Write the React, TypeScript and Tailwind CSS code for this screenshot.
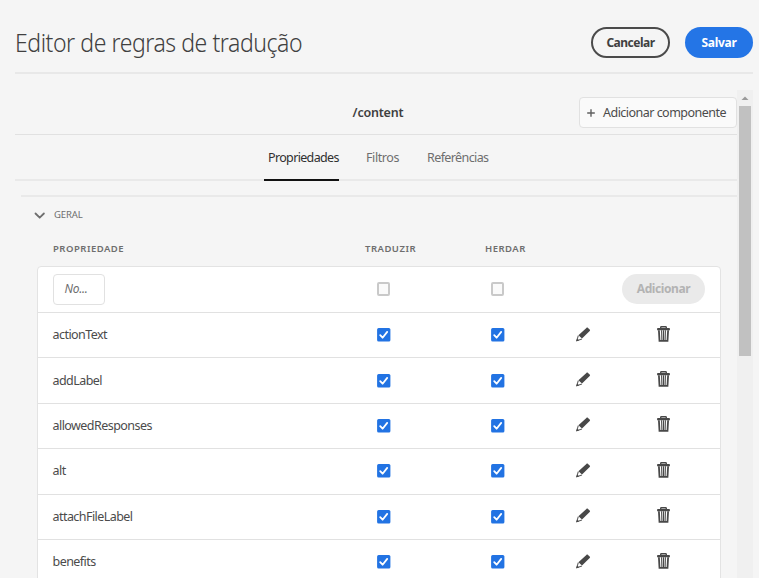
const rows = ['actionText', 'addLabel', 'allowedResponses', 'alt', 'attachFileLabel', 'benefits'];

function Checked() {
  return (
    <svg width="14" height="14" viewBox="0 0 14 14" className="block">
      <rect x="0.1" width="13.3" height="13.4" y="0.1" rx="1.5" fill="#2273e3" />
      <path d="M3.2 7.2 5.6 9.7 10.2 3.9" fill="none" stroke="#fff" strokeWidth="1.8" strokeLinecap="round" strokeLinejoin="round" />
    </svg>
  );
}

function Unchecked() {
  return <div className="mr-px h-[14px] w-[13px] rounded-[2px] border-2 border-[#c9c9c9] bg-[#fafafa]" />;
}

function Pencil() {
  return (
    <svg width="15" height="15" viewBox="0 0 15 15" className="block">
      <path d="M10.4.9c.5-.5 1.1-.5 1.6 0l1.7 1.6c.5.5.5 1.1 0 1.6L6 11.6 2.4 8.2z" fill="#484848" />
      <path d="M2.3 8.7.7 13.8l5.2-1.7" fill="none" stroke="#5c5c5c" strokeWidth="1.1" strokeLinejoin="round" />
      <path d="m.2 14.3.9-2.8 2 1.9z" fill="#484848" />
    </svg>
  );
}

function Trash() {
  return (
    <svg width="13" height="16" viewBox="0 0 13 16" className="block">
      <path d="M3.7 2.6V1.5Q3.7.8 4.4.8h4.2q.7 0 .7.7v1.1" fill="none" stroke="#484848" strokeWidth="1.4" />
      <path d="M.7 2.1h11.6q.6 0 .6.6v1.6H.1V2.7q0-.6.6-.6z" fill="#484848" />
      <path d="M1.9 4.3 2.5 14.8h8l.6-10.5" fill="none" stroke="#484848" strokeWidth="1.8" />
      <path d="m4.6 4.3.3 9.8M6.5 4.3v9.8M8.4 4.3l-.3 9.8" fill="none" stroke="#484848" strokeWidth="1.1" />
    </svg>
  );
}

export default function App() {
  return (
    <div className="flex h-[578px] w-[759px] flex-col overflow-hidden bg-[#f5f5f5] pl-[15px] font-['Noto_Sans',sans-serif] text-[#4b4b4b]">
      <header className="flex h-[74px] w-[738px] shrink-0 items-start border-b-2 border-[#e8e8e8]">
        <h1 className="mt-[24px] w-[300px] origin-left scale-x-[0.886] whitespace-nowrap text-[26px] leading-[36px] font-light tracking-[-0.5px] text-[#404040]">Editor de regras de tradução</h1>
        <div className="mt-[27px] ml-auto flex gap-[15px]">
          <button className="h-[31px] w-[79px] rounded-full border-2 border-[#4b4b4b] text-[12px] leading-[26px] font-bold tracking-[-0.5px] text-[#404040]">Cancelar</button>
          <button className="h-[31px] w-[68px] rounded-full bg-[#2475e6] text-[12px] leading-[30px] font-bold tracking-[-0.3px] text-white">Salvar</button>
        </div>
      </header>

      <div className="mt-4 flex min-h-0 flex-1">
        <main className="flex w-[722px] flex-col">
          <div className="flex h-[45px] shrink-0 border-b border-[#e1e1e1]">
            <div className="w-[159px]" />
            <div className="flex-1 pt-[13px] pl-[3px] text-center text-[12.5px] leading-5 font-semibold tracking-[-0.2px] text-[#3f3f3f]">/content</div>
            <button className="mt-[7px] flex h-[31px] w-[158px] items-center rounded-[4px] border border-[#e1e1e1] bg-[#fafafa] pl-[7px]">
              <svg width="8" height="8" viewBox="0 0 8 8"><path d="M4 .2v7.6M.2 4h7.6" stroke="#606060" strokeWidth="1.4" /></svg>
              <span className="ml-[8px] whitespace-nowrap text-[12.5px] leading-5 tracking-[-0.52px]">Adicionar componente</span>
            </button>
          </div>
          <nav className="flex h-[46px] shrink-0 border-b-2 border-[#e9e9e9] pl-[249px] text-[12.5px] text-[#6e6e6e]">
            <div className="mb-[-2px] h-[46px] w-[75px] border-b-2 border-[#111] pt-[13px] pl-[4px] leading-5 tracking-[-0.65px] text-[#303030]">Propriedades</div>
            <div className="ml-[27px] w-[61px] pt-[13px] leading-5 tracking-[-0.4px]">Filtros</div>
            <div className="pt-[13px] leading-5 tracking-[-0.6px]">Referências</div>
          </nav>
          <section className="mt-[14px] ml-[6px] border-t-2 border-[#e9e9e9]">
            <div className="flex h-[36px] items-center pl-[13px]">
              <svg width="12" height="8" viewBox="0 0 12 8" className="mt-[1px]"><path d="m1.5 1.5 4.2 4.2 4.2-4.2" fill="none" stroke="#6e6e6e" strokeWidth="1.8" strokeLinecap="round" strokeLinejoin="round" /></svg>
              <span className="ml-[8px] text-[9.5px] leading-4 tracking-[-0.1px] text-[#6e6e6e]">GERAL</span>
            </div>
            <div className="flex h-[33px] pt-[8px] pl-[32px] text-[9.5px] leading-4 font-semibold tracking-[0.5px] text-[#6e6e6e]">
              <span className="w-[312px]">PROPRIEDADE</span>
              <span className="w-[120px]">TRADUZIR</span>
              <span>HERDAR</span>
            </div>
            <div className="ml-[15.5px] w-[684px] rounded-t-[4px] border border-[#e3e3e3] bg-white">
              <div className="flex h-[45px] items-center pb-px pl-[15px]">
                <div className="h-[31px] w-[52px] rounded-[4px] border border-[#e1e1e1] pl-[11px] text-[12px] leading-[28px] italic tracking-[-0.3px] text-[#6e6e6e]">No...</div>
                <div className="ml-[272px]"><Unchecked /></div>
                <div className="ml-[100.5px]"><Unchecked /></div>
                <button className="ml-[117px] h-[30px] w-[83px] rounded-full bg-[#eaeaea] text-[12px] leading-[26px] font-bold tracking-[-0.4px] text-[#b3b3b3]">Adicionar</button>
              </div>
              {rows.map((name) => (
                <div key={name} className="flex h-[45.4px] items-center border-t border-[#e1e1e1] pl-[15px]">
                  <span className="w-[324px] text-[12.5px] leading-5 tracking-[-0.55px]">{name}</span>
                  <Checked />
                  <div className="ml-[100.5px]"><Checked /></div>
                  <div className="mt-[-2px] ml-[70.5px]"><Pencil /></div>
                  <div className="mt-[-3px] ml-[66.5px]"><Trash /></div>
                </div>
              ))}
            </div>
          </section>
        </main>
        <div className="flex w-[16px] flex-col items-center bg-[#f0f0f0]">
          <svg width="16" height="16" viewBox="0 0 16 16" className="shrink-0"><path d="M4.5 10 8 6.4l3.5 3.6z" fill="#9a9a9a" /></svg>
          <div className="h-[250px] w-[12px] bg-[#c1c1c1]" />
        </div>
      </div>
    </div>
  );
}
